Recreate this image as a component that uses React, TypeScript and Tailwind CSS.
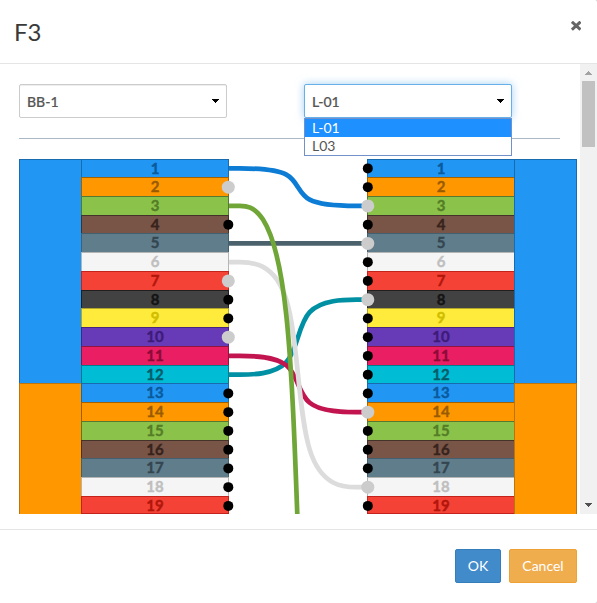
import React from 'react';

type Fiber = { fill: string; edge: string; ink: string };

const FIBERS: Fiber[] = [
  { fill: '#2196f3', edge: '#186bae', ink: '#0a5a9c' },
  { fill: '#ff9800', edge: '#a26100', ink: '#995b00' },
  { fill: '#8bc34a', edge: '#57792f', ink: '#557d27' },
  { fill: '#795548', edge: '#44322b', ink: '#37231c' },
  { fill: '#607d8b', edge: '#42606f', ink: '#344650' },
  { fill: '#f5f5f5', edge: '#b5b5b5', ink: '#bfbfbf' },
  { fill: '#f44336', edge: '#c3231a', ink: '#b3160b' },
  { fill: '#424242', edge: '#1f1f1f', ink: '#141414' },
  { fill: '#ffeb3b', edge: '#b3a52a', ink: '#d1bd00' },
  { fill: '#673ab7', edge: '#46267f', ink: '#3d1c78' },
  { fill: '#e91e63', edge: '#8f1540', ink: '#8c0b37' },
  { fill: '#00bcd4', edge: '#007c8c', ink: '#005e6b' },
];

const PITCH = 18.75;
const numbers = Array.from({ length: 19 }, (_, i) => i + 1);
const rowY = (n: number) => 9.4 + (n - 1) * PITCH;

// Drawn in order, so later links lie on top.
const LINKS = [
  { from: 12, to: 8, color: '#0090a3' },
  { from: 11, to: 14, color: '#c2144f' },
  { from: 6, to: 18, color: '#dcdcdc' },
  { from: 5, to: 5, color: '#4b626d' },
  { from: 3, to: 38, color: '#70a537' },
  { from: 1, to: 3, color: '#0c7cd5' },
];

const LEFT_FREE = [4, 8, 9, 13, 14, 15, 16, 17, 18, 19];
const LEFT_USED = [2, 7, 10];
const RIGHT_USED = [3, 5, 8, 14, 18];

// Cubic B-spline with both inner control points on the vertical midline.
function linkPath(from: number, to: number) {
  const a = rowY(from);
  const b = rowY(to);
  const d = b - a;
  return `M210 ${a}H220.7C232.3 ${a} 255.7 ${a} 267.3 ${a + d / 6}C279 ${a + d / 3} 279 ${a + (2 * d) / 3} 290.7 ${a + (5 * d) / 6}C302.3 ${b} 325.7 ${b} 337.3 ${b}H349`;
}

function Tubes() {
  return (
    <div className="flex w-[63px] shrink-0 flex-col">
      <div className="h-[225px] shrink-0 border border-[#186bae] bg-[#2196f3]" />
      <div className="-mt-px h-[150px] shrink-0 border border-[#b87512] bg-[#ff9800]" />
    </div>
  );
}

function Rows() {
  return (
    <div className="flex w-[148px] shrink-0 flex-col">
      {numbers.map((n) => {
        const f = FIBERS[(n - 1) % 12];
        return (
          <div
            key={n}
            className="-mb-px flex h-[19.75px] shrink-0 justify-center border text-[15px] leading-[17px] font-bold [-webkit-text-stroke:0.4px_currentColor] first:h-[19.15px] last:mb-0 last:h-[18px]"
            style={{ backgroundColor: f.fill, borderColor: f.edge, color: f.ink }}
          >
            <span className="h-4">{n}</span>
          </div>
        );
      })}
    </div>
  );
}

function Select({ value, open }: { value: string; open?: boolean }) {
  return (
    <div
      className={
        'flex h-[34px] w-[208px] items-center justify-between rounded-xs border bg-white pr-[7px] pl-[7px] text-sm text-[#555] ' +
        (open ? 'border-[#66afe9] shadow-[0_0_8px_rgba(102,175,233,0.6)]' : 'border-[#ccc] shadow-[inset_0_1px_1px_rgba(0,0,0,0.075)]')
      }
    >
      <span className="pt-px font-medium [-webkit-text-stroke:0.2px_#555]">{value}</span>
      <svg width="7" height="4" viewBox="0 0 7 4" shapeRendering="crispEdges">
        <path d="M0 0H7V1H6V2H5V3H4V4H3V3H2V2H1V1H0Z" />
      </svg>
    </div>
  );
}

export default function App() {
  return (
    <div className="bg-[#ccc] font-['Lato',sans-serif]">
      <div className="flex h-[603px] w-[597px] flex-col overflow-hidden rounded-r-[2px] bg-white">
        <header className="flex h-16 shrink-0 justify-between border-b border-[#e5e5e5] pr-4 pl-[14px]">
          <h4 className="pt-[17px] text-2xl leading-[30px] text-[#393939]">F3</h4>
          <svg className="mt-[21px]" width="10" height="10" viewBox="0 0 10 10">
            <path d="M2 1.8L8.4 7.6M8.4 1.8L2 7.6" stroke="#666" strokeWidth="3" strokeLinecap="square" />
          </svg>
        </header>

        <div className="flex h-[450px] shrink-0">
          <main className="h-full w-[580px] overflow-hidden pt-5 pl-[19px]">
            <div className="flex gap-[77px]">
              <Select value="BB-1" />
              <div className="relative">
                <Select value="L-01" open />
                <ul className="absolute top-[34px] left-0 z-10 h-[38px] w-[208px] border border-[#7391c9] bg-white text-sm leading-[18px] text-[#555]">
                  <li className="h-[18px] bg-[#1e90ff] pl-[7px] text-white">L-01</li>
                  <li className="h-[18px] pl-[7px]">L03</li>
                </ul>
              </div>
            </div>
            <hr className="mt-5 w-[541px] border-[#a9b7c7]" />
            <div className="relative mt-5 flex h-[355px] w-[558px] overflow-hidden">
              <Tubes />
              <div className="-ml-px">
                <Rows />
              </div>
              <div className="ml-[138px]">
                <Rows />
              </div>
              <div className="-ml-px">
                <Tubes />
              </div>
              <svg className="absolute inset-0" width="558" height="355" fill="none">
                {LINKS.map((l) => (
                  <path key={l.from} d={linkPath(l.from, l.to)} stroke={l.color} strokeWidth="4.7" />
                ))}
                {LEFT_FREE.map((n) => (
                  <circle key={n} cx="209.3" cy={rowY(n)} r="5" fill="#000" />
                ))}
                {LEFT_USED.map((n) => (
                  <circle key={n} cx="209.3" cy={rowY(n)} r="6.5" fill="#ccc" />
                ))}
                {numbers.map((n) =>
                  RIGHT_USED.includes(n) ? (
                    <circle key={n} cx="348.8" cy={rowY(n)} r="6.5" fill="#ccc" />
                  ) : (
                    <circle key={n} cx="348.8" cy={rowY(n)} r="5" fill="#000" />
                  ),
                )}
              </svg>
            </div>
          </main>
          <div className="flex h-full w-[17px] flex-col items-center justify-between bg-[#f1f1f1] pt-[7px] pb-[7px]">
            <div className="flex flex-col items-center">
              <svg width="7" height="4" viewBox="0 0 7 4" shapeRendering="crispEdges">
                <path d="M3 0H4V1H5V2H6V3H7V4H0V3H1V2H2V1H3Z" fill="#a3a3a3" />
              </svg>
              <div className="mt-[6px] h-[66px] w-[13px] bg-[#c1c1c1]" />
            </div>
            <svg width="7" height="4" viewBox="0 0 7 4" shapeRendering="crispEdges">
              <path d="M0 0H7V1H6V2H5V3H4V4H3V3H2V2H1V1H0Z" fill="#505050" />
            </svg>
          </div>
        </div>

        <footer className="mt-[15px] flex grow items-start justify-end gap-2 border-t border-[#e5e5e5] pt-[19px] pr-5 text-sm text-white">
          <button className="h-[34px] w-[46px] rounded-xs border border-[#357ebd] bg-[#428bca]">OK</button>
          <button className="h-[34px] w-[68px] rounded-xs border border-[#eea236] bg-[#f0ad4e]">Cancel</button>
        </footer>
      </div>
    </div>
  );
}
